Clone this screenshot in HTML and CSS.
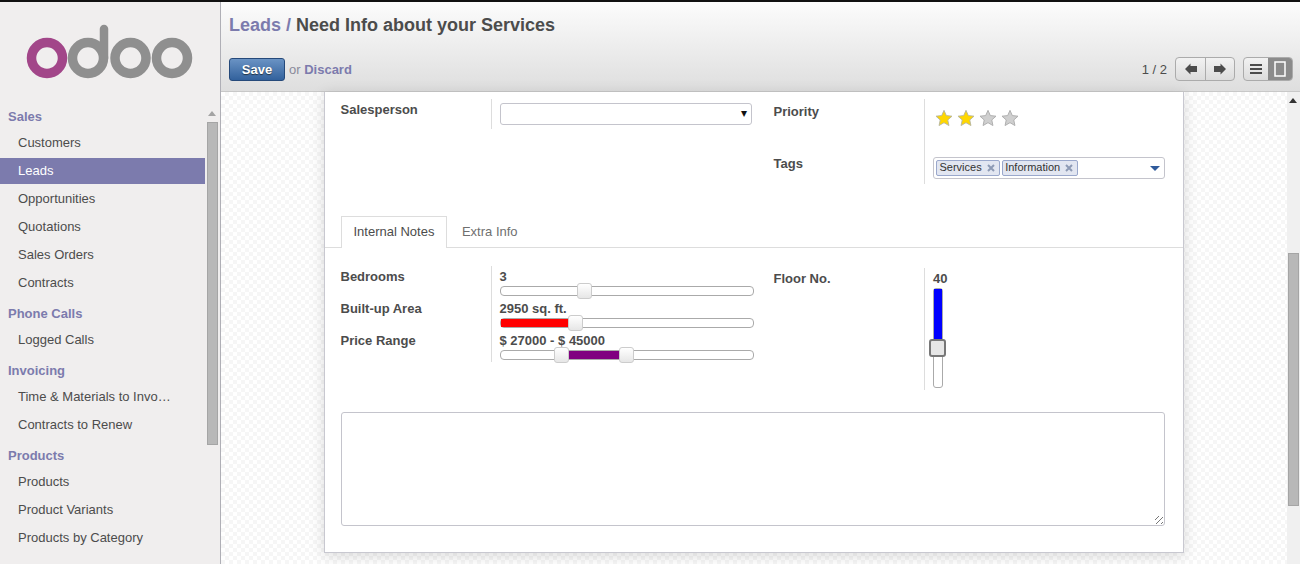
FILE: index.html
```html
<!DOCTYPE html>
<html lang="en">
<head>
    <meta charset="UTF-8">
    <title>Leads - Odoo</title>
    <link rel="stylesheet" href="styles.css">
</head>
<body>
    <div class="app">
        <aside class="sidebar">
            <div class="sidebar-col">
                <div class="logo">
                    <svg width="220" height="103" viewBox="0 0 220 103">
                        <circle cx="47" cy="56" r="15.5" fill="none" stroke="#a24689" stroke-width="9.5"/>
                        <circle cx="88" cy="56" r="15.5" fill="none" stroke="#8f8f8f" stroke-width="9.5"/>
                        <path d="M104 56V27" fill="none" stroke="#8f8f8f" stroke-width="8.5" stroke-linecap="round"/>
                        <circle cx="130.500" cy="56" r="15.5" fill="none" stroke="#8f8f8f" stroke-width="9.5"/>
                        <circle cx="172" cy="56" r="15.5" fill="none" stroke="#8f8f8f" stroke-width="9.5"/>
                    </svg>
                </div>
                <nav class="menu">
                    <div class="menu-head">Sales</div>
                    <a class="menu-item">Customers</a>
                    <a class="menu-item active">Leads</a>
                    <a class="menu-item">Opportunities</a>
                    <a class="menu-item">Quotations</a>
                    <a class="menu-item">Sales Orders</a>
                    <a class="menu-item">Contracts</a>
                    <div class="menu-head">Phone Calls</div>
                    <a class="menu-item">Logged Calls</a>
                    <div class="menu-head">Invoicing</div>
                    <a class="menu-item">Time &amp; Materials to Invo…</a>
                    <a class="menu-item">Contracts to Renew</a>
                    <div class="menu-head">Products</div>
                    <a class="menu-item">Products</a>
                    <a class="menu-item">Product Variants</a>
                    <a class="menu-item">Products by Category</a>
                </nav>
            </div>
            <div class="side-scroll">
                <span class="arrow-up"></span>
                <div class="side-thumb"></div>
            </div>
        </aside>

        <div class="main">
            <header class="topbar">
                <h1 class="crumbs"><a>Leads</a> <span>/</span> Need Info about your Services</h1>
                <div class="actions">
                    <button class="btn-save">Save</button>
                    <span class="or">or <a>Discard</a></span>
                    <div class="pager">1 / 2</div>
                    <div class="btn-group">
                        <button class="btn-nav">
                            <svg width="14" height="12" viewBox="0 0 14 12"><path d="M1 6 6.500 .5V3H13V9H6.500V11.500z" fill="#4c4c4c"/></svg>
                        </button>
                        <button class="btn-nav">
                            <svg width="14" height="12" viewBox="0 0 14 12"><path d="M13 6 7.500 .5V3H1V9H7.500V11.500z" fill="#4c4c4c"/></svg>
                        </button>
                    </div>
                    <div class="btn-group views">
                        <button class="btn-view">
                            <svg width="14" height="12" viewBox="0 0 14 12"><path d="M1 2h12M1 6h12M1 10h12" stroke="#4c4c4c" stroke-width="2"/></svg>
                        </button>
                        <button class="btn-view on">
                            <svg width="12" height="16" viewBox="0 0 12 16"><rect x="1" y="1" width="10" height="14" fill="none" stroke="#fff" stroke-width="1.500"/></svg>
                        </button>
                    </div>
                </div>
            </header>

            <div class="content">
                <div class="canvas">
                    <div class="sheet">
                        <div class="top-fields">
                            <div class="col-left">
                                <div class="label sp-label">Salesperson</div>
                                <div class="value sp-value">
                                    <div class="select"><span class="caret">▾</span></div>
                                </div>
                            </div>
                            <div class="col-right">
                                <div class="labels-stack">
                                    <div class="label">Priority</div>
                                    <div class="label tags-label">Tags</div>
                                </div>
                                <div class="value right-value">
                                    <div class="stars">
                                        <svg class="star" viewBox="0 0 20 20"><path d="M10 1.500 12.600 7.300 18.900 8 14.200 12.200 15.500 18.400 10 15.200 4.500 18.400 5.800 12.200 1.100 8 7.400 7.300z" fill="#ffd700" stroke="#b5b5a0"/></svg>
                                        <svg class="star" viewBox="0 0 20 20"><path d="M10 1.500 12.600 7.300 18.900 8 14.200 12.200 15.500 18.400 10 15.200 4.500 18.400 5.800 12.200 1.100 8 7.400 7.300z" fill="#ffd700" stroke="#b5b5a0"/></svg>
                                        <svg class="star" viewBox="0 0 20 20"><path d="M10 1.500 12.600 7.300 18.900 8 14.200 12.200 15.500 18.400 10 15.200 4.500 18.400 5.800 12.200 1.100 8 7.400 7.300z" fill="#cfcfcf" stroke="#aaa"/></svg>
                                        <svg class="star" viewBox="0 0 20 20"><path d="M10 1.500 12.600 7.300 18.900 8 14.200 12.200 15.500 18.400 10 15.200 4.500 18.400 5.800 12.200 1.100 8 7.400 7.300z" fill="#cfcfcf" stroke="#aaa"/></svg>
                                    </div>
                                    <div class="tags-input">
                                        <span class="tag">Services <svg class="tag-x" viewBox="0 0 8 8"><path d="M1 1 7 7M7 1 1 7"/></svg></span>
                                        <span class="tag">Information <svg class="tag-x" viewBox="0 0 8 8"><path d="M1 1 7 7M7 1 1 7"/></svg></span>
                                        <span class="tags-caret"></span>
                                    </div>
                                </div>
                            </div>
                        </div>

                        <div class="tabs">
                            <a class="tab active">Internal Notes</a>
                            <a class="tab">Extra Info</a>
                        </div>

                        <div class="tab-body">
                            <div class="col-left">
                                <div class="labels-stack">
                                    <div class="label slider-label">Bedrooms</div>
                                    <div class="label slider-label">Built-up Area</div>
                                    <div class="label slider-label">Price Range</div>
                                </div>
                                <div class="value sliders">
                                    <div class="slider-row">
                                        <div class="slider-text">3</div>
                                        <div class="track">
                                            <span class="handle" style="left: 76px"></span>
                                        </div>
                                    </div>
                                    <div class="slider-row">
                                        <div class="slider-text">2950 sq. ft.</div>
                                        <div class="track">
                                            <span class="fill red" style="left: 0; width: 68px"></span>
                                            <span class="handle" style="left: 67px"></span>
                                        </div>
                                    </div>
                                    <div class="slider-row">
                                        <div class="slider-text">$ 27000 - $ 45000</div>
                                        <div class="track">
                                            <span class="fill purple" style="left: 67px; width: 52px"></span>
                                            <span class="handle" style="left: 53px"></span>
                                            <span class="handle" style="left: 118px"></span>
                                        </div>
                                    </div>
                                </div>
                            </div>
                            <div class="col-right floor">
                                <div class="label floor-label">Floor No.</div>
                                <div class="value floor-value">
                                    <div class="floor-num">40</div>
                                    <div class="vtrack">
                                        <span class="vfill" style="height: 51px"></span>
                                        <span class="vhandle" style="top: 50px"></span>
                                    </div>
                                </div>
                            </div>
                        </div>

                        <div class="notes">
                            <span class="grip"></span>
                        </div>
                    </div>
                </div>
                <div class="main-scroll">
                    <span class="arrow-up dark"></span>
                    <div class="main-thumb"></div>
                </div>
            </div>
        </div>
    </div>
</body>
</html>
```
FILE: styles.css
```css
* {
    box-sizing: border-box;
}
html, body {
    margin: 0;
    height: 100%;
    overflow: hidden;
}
body {
    font-family: "Liberation Sans", Arial, sans-serif;
    font-size: 13px;
    color: #4c4c4c;
    background: #fff;
}
a {
    color: #7c7bad;
    text-decoration: none;
}
button {
    font-family: inherit;
    padding: 0;
}
.app {
    display: flex;
    height: 564px;
    border-top: 2px solid #111;
}

/* sidebar */
.sidebar {
    display: flex;
    width: 221px;
    flex: none;
    background: #f0eeee;
    border-right: 1px solid #afafb6;
}
.sidebar-col {
    width: 205px;
    flex: none;
}
.logo {
    width: 220px;
    height: 103px;
}
.logo svg {
    display: block;
}
.menu {
    display: flex;
    flex-direction: column;
}
.menu-head {
    height: 25px;
    line-height: 23px;
    padding-left: 8px;
    font-weight: bold;
    color: #7c7bad;
    margin-top: 4px;
}
.menu-head:first-child {
    margin-top: 0;
}
.menu-item {
    height: 26px;
    line-height: 26px;
    margin-bottom: 2px;
    padding-left: 18px;
    color: #4c4c4c;
}
.menu-item.active {
    background: #7c7bad;
    color: #fff;
}
.side-scroll {
    width: 15px;
    padding-top: 109px;
    position: relative;
}
.arrow-up {
    display: block;
    width: 0;
    height: 0;
    margin: 0 auto 6px 3px;
    border-left: 4px solid transparent;
    border-right: 4px solid transparent;
    border-bottom: 5px solid #a3a3a3;
}
.side-thumb {
    width: 11px;
    margin-left: 2px;
    height: 323px;
    background: #b8b8b8;
    border: 1px solid #a5a5a5;
}

/* header */
.main {
    flex: 1;
    min-width: 0;
    display: flex;
    flex-direction: column;
}
.topbar {
    height: 90px;
    flex: none;
    padding: 13px 7px 0 8px;
    background: linear-gradient(#fcfcfc, #dedede);
    border-bottom: 1px solid #c8c8c8;
}
.crumbs {
    margin: 0;
    height: 20px;
    font-size: 18px;
    line-height: 20px;
    font-weight: bold;
    color: #4c4c4c;
}
.crumbs span {
    color: #7c7bad;
}
.actions {
    display: flex;
    align-items: center;
    margin-top: 22px;
}
.btn-save {
    width: 56px;
    height: 23px;
    color: #fff;
    font-size: 13px;
    font-weight: bold;
    background: linear-gradient(#6a93c4, #32619c);
    border: 1px solid #25497a;
    border-radius: 3px;
    text-shadow: 0 1px 1px #234;
}
.or {
    margin-left: 4px;
    color: #8a8a9a;
}
.or a {
    font-weight: bold;
}
.pager {
    margin-left: auto;
    margin-right: 8px;
    color: #4c4c4c;
}
.btn-group {
    display: flex;
    height: 24px;
    border: 1px solid #ababab;
    border-radius: 4px;
    background: linear-gradient(#f2f2f2, #dcdcdc);
    overflow: hidden;
}
.views {
    margin-left: 8px;
}
.btn-nav, .btn-view {
    display: flex;
    align-items: center;
    justify-content: center;
    height: 100%;
    border: 0;
    background: none;
}
.btn-nav {
    width: 29px;
}
.btn-nav + .btn-nav {
    border-left: 1px solid #ababab;
}
.btn-view {
    width: 24px;
}
.btn-view.on {
    background: #8b8b8b;
}

/* form */
.content {
    flex: 1;
    display: flex;
    min-height: 0;
}
.canvas {
    flex: 1;
    min-width: 0;
    padding-left: 103px;
    background-color: #fff;
    background-image: repeating-conic-gradient(#f6f6f6 0 25%, #fff 0 50%);
    background-size: 8px 8px;
}
.sheet {
    width: 860px;
    height: 461px;
    background: #fff;
    border: 1px solid #c8c8d0;
    border-top: 0;
    box-shadow: 0 3px 14px rgba(0, 0, 0, .14);
    padding-top: 7px;
}
.top-fields, .tab-body {
    display: flex;
    padding-left: 15.5px;
}
.col-left {
    display: flex;
    width: 433px;
    flex: none;
    align-items: flex-start;
}
.col-right {
    display: flex;
    flex: 1;
    align-items: flex-start;
}
.label {
    font-weight: bold;
    width: 150.5px;
    flex: none;
    line-height: 15px;
}
.labels-stack {
    width: 150.5px;
    flex: none;
}
.floor-label {
    width: 150.5px;
}
.value {
    border-left: 1px solid #ddd;
    padding-left: 8px;
}
.sp-label {
    padding-top: 3px;
}
.sp-value {
    height: 30px;
    padding-top: 4px;
}
.select {
    position: relative;
    width: 252px;
    height: 22px;
    border: 1px solid #c4c4cc;
    border-radius: 3px;
    background: #fff;
}
.caret {
    position: absolute;
    right: 4px;
    top: 2px;
    font-size: 12px;
    color: #111;
}
.col-right .label {
    padding-top: 5px;
}
.col-right .tags-label {
    padding-top: 0;
    margin-top: 37px;
}
.right-value {
    height: 85px;
}
.stars {
    display: flex;
    gap: 4px;
    height: 58px;
    padding: 10px 0 0 1.500px;
}
.star {
    width: 18px;
    height: 18px;
}
.tags-input {
    position: relative;
    display: flex;
    align-items: center;
    gap: 2px;
    width: 232px;
    height: 22px;
    padding-left: 2px;
    border: 1px solid #c4c4cc;
    border-radius: 3px;
}
.tag {
    display: flex;
    align-items: center;
    height: 16px;
    padding: 0 4px 2px 2.500px;
    font-size: 11px;
    color: #333;
    background: #e2e6f1;
    border: 1px solid #9aa8cc;
    border-radius: 2px;
}
.tag-x {
    width: 8px;
    height: 8px;
    margin: 2px 0 0 5px;
    fill: none;
    stroke: #8d9ab5;
    stroke-width: 2;
}
.tags-caret {
    position: absolute;
    right: 4px;
    top: 8px;
    border-left: 5px solid transparent;
    border-right: 5px solid transparent;
    border-top: 5px solid #2f5a9b;
}

/* tabs */
.tabs {
    display: flex;
    align-items: flex-end;
    height: 32px;
    margin-top: 32px;
    padding-left: 16px;
    border-bottom: 1px solid #ddd;
}
.tab {
    height: 32px;
    line-height: 33px;
    padding: 0 12px;
    color: #6f6f6f;
    margin-right: 3px;
}
.tab.active {
    line-height: 30px;
    padding: 0 11.500px;
    color: #4c4c4c;
    background: #fff;
    border: 1px solid #ddd;
    border-bottom: 0;
    margin-bottom: -1px;
}
.tab-body {
    margin-top: 18px;
}

/* sliders */
.slider-label {
    height: 32px;
    padding-top: 3px;
}
.sliders {
    height: 96px;
}
.slider-row {
    height: 32px;
    width: 254px;
}
.slider-text {
    font-weight: bold;
    line-height: 15px;
    height: 20px;
    padding-top: 3px;
    margin-left: -.5px;
}
.track {
    position: relative;
    height: 10px;
    border: 1px solid #aaa;
    border-radius: 4px;
    background: #fff;
}
.fill {
    position: absolute;
    top: 0;
    height: 8px;
}
.fill.red {
    background: #f00;
}
.fill.purple {
    background: #800080;
}
.handle {
    position: absolute;
    top: -4px;
    width: 15px;
    height: 16px;
    background: linear-gradient(#fff, #e6e6e6);
    border: 1px solid #ccc;
    border-radius: 3px;
}
.floor {
    padding-top: 2px;
}
.col-right .floor-label {
    padding-top: 3px;
}
.floor-value {
    height: 122px;
}
.floor-num {
    font-weight: bold;
    line-height: 15px;
    padding-top: 3px;
    height: 20px;
}
.vtrack {
    position: relative;
    width: 10px;
    height: 100px;
    border: 1px solid #aaa;
    border-radius: 3px;
}
.vfill {
    position: absolute;
    left: 0;
    top: 0;
    width: 8px;
    background: #00f;
}
.vhandle {
    position: absolute;
    left: -5px;
    width: 17px;
    height: 18px;
    background: #e6e6e6;
    border: 2px solid #777;
    border-radius: 3px;
}
.notes {
    position: relative;
    width: 824px;
    height: 114px;
    margin: 22px 0 0 16px;
    border: 1px solid #c4c4cc;
    border-radius: 3px;
}
.grip {
    position: absolute;
    right: 1px;
    bottom: 1px;
    width: 8px;
    height: 8px;
    background: repeating-linear-gradient(135deg, transparent 0 2.500px, #777 2.500px 3.500px);
}

/* main scrollbar */
.main-scroll {
    width: 13px;
    flex: none;
    background: #f0f0f0;
    padding-top: 6px;
}
.arrow-up.dark {
    border-bottom-color: #333;
    margin: 0 0 0 2px;
}
.main-thumb {
    width: 11px;
    height: 253px;
    margin: 150px 0 0 1px;
    background: #b8b8b8;
    border: 1px solid #a5a5a5;
}
```
